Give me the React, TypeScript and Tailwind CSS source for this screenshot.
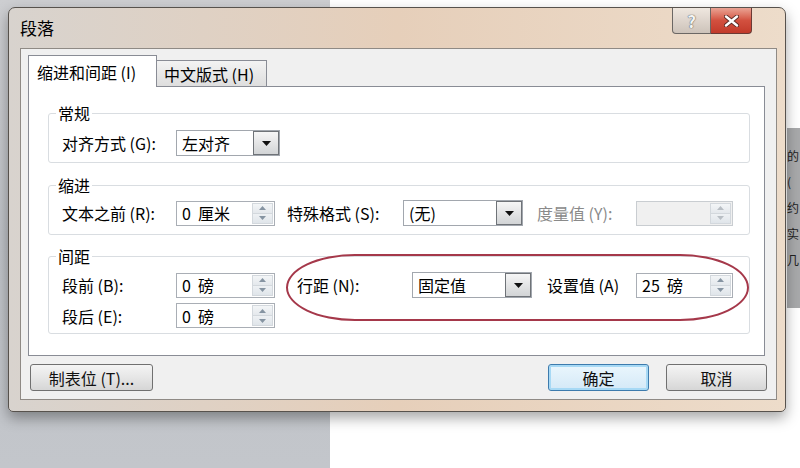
import React from "react";

const font = { fontFamily: '"Noto Sans CJK SC", "Noto Sans", sans-serif' };

function Combo({ value, className }: { value: string; className: string }) {
  return (
    <div className={`flex h-[26px] items-stretch border border-[#a2a7ae] bg-white ${className}`}>
      <span className="flex flex-1 items-center pl-[5px] text-[16px] text-black">{value}</span>
      <span className="flex w-[26px] items-center justify-center border border-[#6f7378] bg-linear-to-b from-[#f6f6f6] to-[#d2d4d6]">
        <svg width="9" height="5" viewBox="0 0 9 5">
          <path d="M0 0H9L4.5 5Z" fill="#111" />
        </svg>
      </span>
    </div>
  );
}

function Spin({ value, className, disabled }: { value?: string; className: string; disabled?: boolean }) {
  const arrow = disabled ? "#b8bec4" : "#8694a2";
  return (
    <div
      className={`flex h-[25px] items-stretch border ${
        disabled ? "border-[#c9cdd1] bg-[#f0f0f0]" : "border-[#a9aeb5] bg-white"
      } ${className}`}
    >
      <span className="flex flex-1 items-center whitespace-pre pl-[5px] text-[16px] text-black">{value}</span>
      <span className="my-[1px] mr-[1px] flex w-[21px] flex-col border border-[#d3d8dd]">
        <span className="flex flex-1 items-center justify-center border-b border-[#d3d8dd] bg-linear-to-b from-[#f3f5f7] to-[#e4e8ec]">
          <svg width="7" height="4" viewBox="0 0 7 4">
            <path d="M0 4H7L3.5 0Z" fill={arrow} />
          </svg>
        </span>
        <span className="flex flex-1 items-center justify-center bg-linear-to-b from-[#eef1f4] to-[#e0e5ea]">
          <svg width="7" height="4" viewBox="0 0 7 4">
            <path d="M0 0H7L3.5 4Z" fill={arrow} />
          </svg>
        </span>
      </span>
    </div>
  );
}

function Group({ title, className, children }: { title: string; className: string; children: React.ReactNode }) {
  return (
    <fieldset className={`w-[702px] rounded-[3px] border border-[#d9dde1] ${className}`}>
      <legend className="ml-[7px] px-[2px] text-[16px] leading-[20px] text-black">{title}</legend>
      {children}
    </fieldset>
  );
}

function Button({ label, className, focused }: { label: string; className: string; focused?: boolean }) {
  return (
    <div
      className={`flex h-[27px] items-center justify-center rounded-[3px] border text-[16px] text-[#111] ${
        focused
          ? "border-[#3d7bad] bg-linear-to-b from-[#eaf6fd] to-[#d4e9f7] shadow-[inset_0_0_0_2px_#a7d9f5]"
          : "border-[#707070] bg-linear-to-b from-[#f4f4f4] via-[#e6e6e6] to-[#d6d6d6]"
      } ${className}`}
    >
      {label}
    </div>
  );
}

export default function App() {
  return (
    <div className="relative h-[468px] w-[800px] overflow-hidden bg-white" style={font}>
      {/* desktop behind the dialog */}
      <div className="flex h-full">
        <div className="h-full w-[330px] bg-linear-to-b from-[#cdced1] via-[#bfc2c7] to-[#c3c6cb]" />
        <div className="h-full flex-1 bg-white" />
      </div>
      <div className="absolute left-[787px] top-[128px] flex h-[180px] w-[13px] flex-col items-start gap-[10px] bg-[#a8a9ab] pt-[20px] text-[12px] leading-[16px] text-[#222]">
        <span>的</span>
        <span>(</span>
        <span>约</span>
        <span>实</span>
        <span>几</span>
      </div>

      {/* dialog window */}
      <div className="absolute left-[8px] top-[7px] flex h-[405px] w-[778px] flex-col rounded-t-[7px] rounded-b-[5px] border border-[#57524d] bg-linear-to-r from-[#d8d3ce] via-[#e6cfba] to-[#eddcca] shadow-[0_6px_14px_rgba(0,0,0,0.35)]">
        {/* title bar */}
        <div className="flex h-[40px] shrink-0 items-start">
          <span className="pl-[11px] pt-[10px] text-[17px] leading-[20px] text-black">段落</span>
          <div className="ml-auto mr-[33px] flex">
            <div className="flex h-[26px] w-[39px] items-center justify-center rounded-bl-[4px] border border-t-0 border-[#6b6764] bg-linear-to-b from-[#efe7df] to-[#cdc3ba]">
              <span className="text-[17px] font-bold leading-none text-[#f4f4f4] [text-shadow:0_0_1px_#555,0_0_1px_#555]">?</span>
            </div>
            <div className="flex h-[26px] w-[41px] items-center justify-center rounded-br-[4px] border border-l-0 border-t-0 border-[#6b3a34] bg-linear-to-b from-[#e9a394] via-[#d2503f] to-[#c23a2a]">
              <svg width="15" height="12" viewBox="0 0 15 12">
                <path d="M2 1.5L13 10.5M13 1.5L2 10.5" stroke="#5a2a24" strokeWidth="4.2" strokeLinecap="round" />
                <path d="M2 1.5L13 10.5M13 1.5L2 10.5" stroke="#ffffff" strokeWidth="2.4" strokeLinecap="round" />
              </svg>
            </div>
          </div>
        </div>

        {/* client area */}
        <div className="ml-[11px] mr-[8px] flex h-[352px] flex-col border border-[#8f8a85] bg-[#f0f0f0] px-[7px]">
          {/* tabs */}
          <div className="mt-[8px] flex h-[29px] items-end">
            <div className="relative z-10 -mb-[1px] flex h-[32px] w-[129px] items-center whitespace-pre border border-b-0 border-[#898c95] bg-white pl-[8px] text-[16px] text-black">
              缩进和间距 (I)
            </div>
            <div className="flex h-[26px] w-[110px] items-center whitespace-pre border border-l-0 border-b-0 border-[#898c95] bg-linear-to-b from-[#f3f3f3] to-[#dedede] pl-[7px] text-[16px] text-black">
              中文版式 (H)
            </div>
          </div>

          {/* panel */}
          <div className="relative flex h-[270px] w-[737px] flex-col border border-[#898c95] bg-white px-[19px] pt-[16px]">
            <Group title="常规" className="h-[60px]">
              <div className="flex items-center pl-[13px] pt-[7px]">
                <span className="w-[114px] whitespace-pre text-[16px] text-black">对齐方式 (G):</span>
                <Combo value="左对齐" className="w-[104px]" />
              </div>
            </Group>

            <Group title="缩进" className="mt-[12px] h-[60px]">
              <div className="flex items-center pl-[13px] pt-[5px]">
                <span className="w-[114px] whitespace-pre text-[16px] text-black">文本之前 (R):</span>
                <Spin value="0  厘米" className="w-[99px]" />
                <span className="ml-[12px] w-[116px] whitespace-pre text-[16px] text-black">特殊格式 (S):</span>
                <Combo value="(无)" className="w-[120px]" />
                <span className="ml-[14px] w-[99px] whitespace-pre text-[16px] text-[#8a8a8a]">度量值 (Y):</span>
                <Spin className="w-[97px]" disabled />
              </div>
            </Group>

            <Group title="间距" className="mt-[11px] h-[88px]">
              <div className="flex flex-col gap-[5px] pl-[13px] pt-[6px]">
                <div className="flex items-center">
                  <span className="w-[114px] whitespace-pre text-[16px] text-black">段前 (B):</span>
                  <Spin value="0  磅" className="w-[99px]" />
                  <span className="ml-[22px] w-[115px] whitespace-pre text-[16px] text-black">行距 (N):</span>
                  <Combo value="固定值" className="w-[120px]" />
                  <span className="ml-[15px] w-[89px] whitespace-pre text-[16px] text-black">设置值 (A)</span>
                  <Spin value="25  磅" className="w-[97px]" />
                </div>
                <div className="flex items-center">
                  <span className="w-[114px] whitespace-pre text-[16px] text-black">段后 (E):</span>
                  <Spin value="0  磅" className="w-[99px]" />
                </div>
              </div>
            </Group>

            {/* red annotation ring */}
            <div className="pointer-events-none absolute left-[257px] top-[167px] h-[67px] w-[463px] rounded-[70px/34px] border-2 border-[#a5384a]" />
          </div>

          {/* buttons */}
          <div className="mt-[8px] flex">
            <Button label="制表位 (T)..." className="ml-[2px] w-[123px] whitespace-pre" />
            <Button label="确定" className="ml-auto w-[101px]" focused />
            <Button label="取消" className="ml-[17px] mr-[2px] w-[101px]" />
          </div>
        </div>
      </div>
    </div>
  );
}
